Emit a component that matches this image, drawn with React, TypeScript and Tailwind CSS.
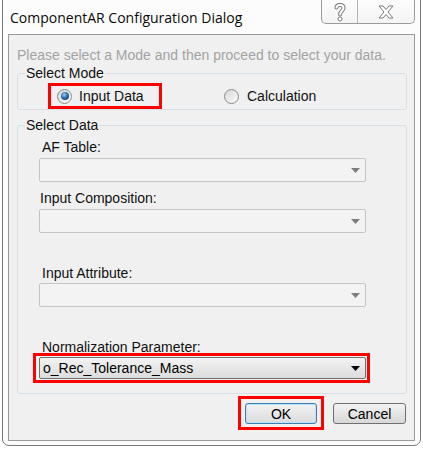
import React from 'react';

const Arrow = ({ color }: { color: string }) => (
  <svg width="9" height="5" viewBox="0 0 9 5">
    <path d="M0 0 H9 L4.5 5 Z" fill={color} />
  </svg>
);

const Combo = ({ value, active }: { value?: string; active?: boolean }) => (
  <div
    className={
      active
        ? 'flex h-[22px] w-[327px] items-center justify-between rounded-[2px] border border-[#707070] bg-gradient-to-b from-[#f3f3f3] to-[#dcdcdc] pl-[3px] pr-[5px]'
        : 'flex h-[24px] w-[327px] items-center justify-between rounded-[2px] border border-[#c4c4c4] bg-[#f3f3f3] pl-[3px] pr-[5px]'
    }
  >
    <span className="text-[14px] leading-[16px] text-black">{value}</span>
    <Arrow color={active ? '#000000' : '#7d7d7d'} />
  </div>
);

const Radio = ({ checked }: { checked?: boolean }) => (
  <span className="flex h-[15px] w-[15px] shrink-0 items-center justify-center rounded-full border border-[#8a8a8a] bg-gradient-to-br from-[#d8d8d8] to-[#fbfbfb]">
    {checked && (
      <span className="h-[8px] w-[8px] rounded-full bg-[radial-gradient(circle_at_40%_35%,#9fd3f7_0%,#2a6eaa_45%,#0d2a52_100%)]" />
    )}
  </span>
);

const Field = ({ label, ml = 'ml-[24px]', mt }: { label: string; ml?: string; mt: string }) => (
  <div className={`${mt} ${ml} text-[14px] leading-[16px] text-[#111]`}>{label}</div>
);

export default function App() {
  return (
    <div className="h-[450px] w-[423px] overflow-hidden bg-white font-['Liberation_Sans',Arial,sans-serif]">
      <div className="-mt-[8px] ml-[2px] flex h-[454px] w-[419px] flex-col rounded-[7px] border border-[#7a7a7a] bg-[#fcfcfc] px-[5px] pb-[4px]">
        {/* title bar */}
        <div className="flex h-[41px] shrink-0 items-start justify-between">
          <div className="pl-[2px] pt-[15px] font-['Open_Sans',sans-serif] text-[14px] leading-[19px] text-[#0a0a0a]">
            ComponentAR Configuration Dialog
          </div>
          <div className="-mt-[1px] flex h-[32px] rounded-b-[5px] border border-t-0 border-[#9c9c9c] bg-gradient-to-b from-[#ffffff] to-[#f4f4f4]">
            <div className="flex w-[36px] items-center justify-center border-r border-[#b4b4b4] pt-[10px]">
              <svg width="12" height="19" viewBox="0 0 12 19">
                <path
                  d="M2.5 4.5 C2.5 1 9.5 1 9.5 5 C9.5 8 6 8 6 11.5"
                  fill="none"
                  stroke="#7c7c7c"
                  strokeWidth="4"
                  strokeLinecap="round"
                />
                <path
                  d="M2.5 4.5 C2.5 1 9.5 1 9.5 5 C9.5 8 6 8 6 11.5"
                  fill="none"
                  stroke="#ffffff"
                  strokeWidth="2"
                  strokeLinecap="round"
                />
                <circle cx="6" cy="16" r="2" fill="#ffffff" stroke="#7c7c7c" strokeWidth="1" />
              </svg>
            </div>
            <div className="flex w-[56px] items-center justify-center pt-[8px]">
              <svg width="16" height="14" viewBox="0 0 16 14">
                <path
                  d="M1 1 H5 L8 4.5 L11 1 H15 L10 7 L15 13 H11 L8 9.5 L5 13 H1 L6 7 Z"
                  fill="#ffffff"
                  stroke="#7c7c7c"
                  strokeWidth="1"
                  strokeLinejoin="round"
                />
              </svg>
            </div>
          </div>
        </div>

        {/* client area */}
        <div className="flex h-[407px] shrink-0 flex-col border border-[#9a9a9a] bg-[#f0f0f0] text-[14px] leading-[16px]">
          <div className="ml-[8px] mt-[12px] text-[#a3a3a3]">
            Please select a Mode and then proceed to select your data.
          </div>

          <fieldset className="ml-[8px] mr-[7px] mt-[2px] rounded-[3px] border border-[#d5dfe5]">
            <legend className="ml-[7px] px-[1px] text-[#111]">Select Mode</legend>
            <div className="flex items-center">
              <div className="ml-[30px] mt-[2px] flex h-[26px] w-[114px] items-center border-[3px] border-[#ff0000] pl-[6px]">
                <Radio checked />
                <span className="ml-[7px] text-[#111]">Input Data</span>
              </div>
              <div className="ml-[62px] mt-[2px] flex items-center">
                <Radio />
                <span className="ml-[8px] text-[#111]">Calculation</span>
              </div>
            </div>
          </fieldset>

          <fieldset className="ml-[8px] mr-[7px] mt-[7px] rounded-[3px] border border-[#d5dfe5] pb-[10px]">
            <legend className="ml-[7px] px-[1px] text-[#111]">Select Data</legend>
            <Field label="AF Table:" mt="mt-[6px]" />
            <div className="ml-[21px] mt-[3px]">
              <Combo />
            </div>
            <Field label="Input Composition:" ml="ml-[22px]" mt="mt-[8px]" />
            <div className="ml-[21px] mt-[3px]">
              <Combo />
            </div>
            <Field label="Input Attribute:" mt="mt-[32px]" />
            <div className="ml-[21px] mt-[2px]">
              <Combo />
            </div>
            <Field label="Normalization Parameter:" mt="mt-[32px]" />
            <div className="-mt-[2px] ml-[15px] w-[337px] border-[3px] border-[#ff0000] py-[1px] pl-[3px]">
              <Combo value="o_Rec_Tolerance_Mass" active />
            </div>
          </fieldset>

          <div className="mr-[8px] mt-[2px] flex items-start justify-end">
            <div className="h-[34px] w-[86px] border-[3px] border-[#ff0000] px-[4px] pt-[4px]">
              <button className="flex h-[21px] w-[72px] items-center justify-center rounded-[3px] border border-[#3c7fb1] bg-gradient-to-b from-[#f2f2f2] to-[#dcdcdc] text-[14px] leading-[16px] text-black shadow-[inset_0_0_0_1px_#b8e0f6]">
                OK
              </button>
            </div>
            <button className="ml-[9px] mt-[7px] flex h-[21px] w-[73px] items-center justify-center rounded-[3px] border border-[#707070] bg-gradient-to-b from-[#f2f2f2] to-[#d8d8d8] text-[14px] leading-[16px] text-black">
              Cancel
            </button>
          </div>
        </div>
      </div>
    </div>
  );
}
